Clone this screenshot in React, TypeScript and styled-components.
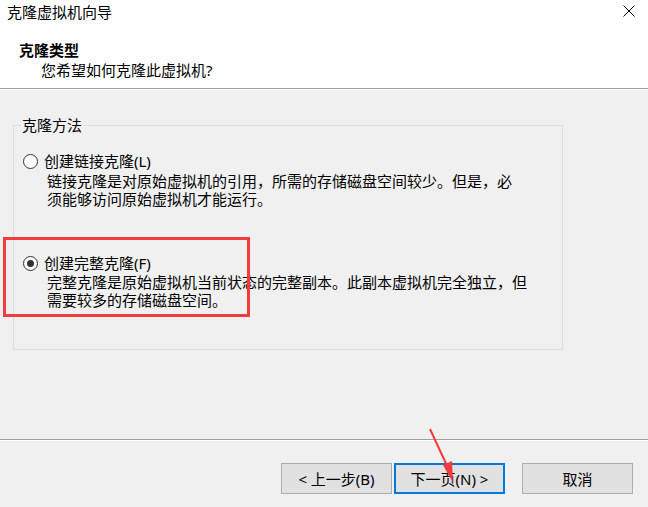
import React from 'react';
import styled, {createGlobalStyle} from 'styled-components';

const GlobalStyle = createGlobalStyle`
    html, body {
        margin: 0;
        padding: 0;
        background: #f0f0f0;
    }
    body {
        font-family: "Noto Sans", "Noto Sans CJK SC", sans-serif;
        font-size: 15px;
        color: #000;
    }
`;

const Window = styled.div`
    position: relative;
    display: flex;
    flex-direction: column;
    width: 648px;
    height: 507px;
    background: #f0f0f0;
    overflow: hidden;
`;

const TitleBar = styled.div`
    display: flex;
    align-items: center;
    justify-content: space-between;
    height: 25px;
    padding: 0 13px 0 7px;
    background: #fff;
`;

const TitleText = styled.span`
    font-size: 15px;
    line-height: 25px;
    margin-top: -1px;
`;

const CloseButton = styled.svg`
    width: 12px;
    height: 12px;
    margin-top: -3px;
`;

const Header = styled.div`
    display: flex;
    flex-direction: column;
    height: 48px;
    padding: 15px 0 0 19px;
    background: #fff;
`;

const HeaderTitle = styled.div`
    font-weight: bold;
    line-height: 20px;
`;

const HeaderSub = styled.div`
    line-height: 20px;
    margin-left: 22px;
`;

const Divider = styled.div`
    height: 1px;
    background: #a0a0a0;
    border-bottom: 1px solid #fff;
`;

const Body = styled.div`
    flex: 1;
    padding: 25px 0 0 13px;
`;

const GroupBox = styled.fieldset`
    box-sizing: border-box;
    width: 550px;
    height: 235px;
    margin: 0;
    padding: 0 0 0 9px;
    border: 1px solid #dcdcdc;
`;

const Legend = styled.legend`
    padding: 0 1px;
    margin-left: -2px;
    line-height: 20px;
`;

const Option = styled.div<{ $gap: number }>`
    display: flex;
    flex-direction: column;
    margin-top: ${(p) => p.$gap}px;
`;

const OptionRow = styled.label`
    display: flex;
    align-items: center;
    gap: 6px;
    line-height: 20px;
`;

const Radio = styled.span<{ $checked?: boolean }>`
    position: relative;
    box-sizing: border-box;
    width: 15px;
    height: 15px;
    border-radius: 50%;
    border: 1px solid #333;
    background: #fff;

    &::after {
        content: '';
        display: ${(p) => (p.$checked ? 'block' : 'none')};
        position: absolute;
        left: 3px;
        top: 3px;
        width: 7px;
        height: 7px;
        border-radius: 50%;
        background: #333;
    }
`;

const Description = styled.div<{ $offset: number }>`
    margin: ${(p) => p.$offset}px 0 0 24px;
    line-height: 18px;
`;

const Footer = styled.div`
    display: flex;
    justify-content: flex-end;
    height: 44px;
    padding: 22px 15px 0 0;
`;

const Button = styled.button<{ $primary?: boolean; $gap?: number }>`
    box-sizing: border-box;
    width: 111px;
    height: 31px;
    padding: 0;
    margin: 0 0 0 ${(p) => p.$gap ?? 0}px;
    background: #e1e1e1;
    border: ${(p) => (p.$primary ? '2px solid #0078d7' : '1px solid #adadad')};
    font-family: inherit;
    font-size: 15px;
    color: #000;
`;

const Highlight = styled.div`
    position: absolute;
    left: 3px;
    top: 237px;
    width: 247px;
    height: 80px;
    box-sizing: border-box;
    border: 3px solid #f23b3b;
    pointer-events: none;
`;

const Arrow = styled.svg`
    position: absolute;
    left: 420px;
    top: 424px;
    width: 45px;
    height: 66px;
    pointer-events: none;
`;

export default function App() {
    return (
        <Window>
            <GlobalStyle/>
            <TitleBar>
                <TitleText>克隆虚拟机向导</TitleText>
                <CloseButton viewBox="0 0 12 12">
                    <path d="M0.5 0.5 L11.5 11.5 M11.5 0.5 L0.5 11.5" stroke="#000" strokeWidth="1"/>
                </CloseButton>
            </TitleBar>
            <Header>
                <HeaderTitle>克隆类型</HeaderTitle>
                <HeaderSub>您希望如何克隆此虚拟机?</HeaderSub>
            </Header>
            <Divider/>
            <Body>
                <GroupBox>
                    <Legend>克隆方法</Legend>
                    <Option $gap={16}>
                        <OptionRow>
                            <Radio/>
                            创建链接克隆(L)
                        </OptionRow>
                        <Description $offset={1}>
                            链接克隆是对原始虚拟机的引用，所需的存储磁盘空间较少。但是，必<br/>
                            须能够访问原始虚拟机才能运行。
                        </Description>
                    </Option>
                    <Option $gap={45}>
                        <OptionRow>
                            <Radio $checked/>
                            创建完整克隆(F)
                        </OptionRow>
                        <Description $offset={0}>
                            完整克隆是原始虚拟机当前状态的完整副本。此副本虚拟机完全独立，但<br/>
                            需要较多的存储磁盘空间。
                        </Description>
                    </Option>
                </GroupBox>
            </Body>
            <Divider/>
            <Footer>
                <Button>&lt; 上一步(B)</Button>
                <Button $primary $gap={2}>下一页(N) &gt;</Button>
                <Button $gap={17}>取消</Button>
            </Footer>
            <Highlight/>
            <Arrow viewBox="0 0 45 66">
                <line x1="10" y1="5" x2="29" y2="46" stroke="#f23b3b" strokeWidth="2"/>
                <polygon points="33,59 23,41 32,37" fill="#f23b3b"/>
            </Arrow>
        </Window>
    );
}
